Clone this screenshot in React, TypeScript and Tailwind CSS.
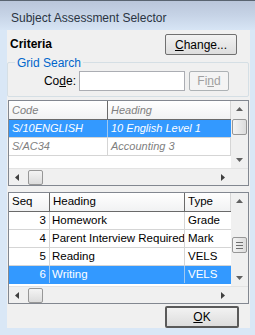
import React from "react";

const ui = { fontFamily: '"Liberation Sans", Arial, sans-serif' };

function ArrowUp() {
  return (
    <svg width="7" height="4" viewBox="0 0 7 4">
      <path d="M3.5 0 L7 4 L0 4 Z" fill="#606060" />
    </svg>
  );
}
function ArrowDown() {
  return (
    <svg width="7" height="4" viewBox="0 0 7 4">
      <path d="M0 0 L7 0 L3.5 4 Z" fill="#606060" />
    </svg>
  );
}
function ArrowLeft() {
  return (
    <svg width="4" height="7" viewBox="0 0 4 7">
      <path d="M4 0 L4 7 L0 3.5 Z" fill="#404040" />
    </svg>
  );
}
function ArrowRight() {
  return (
    <svg width="4" height="7" viewBox="0 0 4 7">
      <path d="M0 0 L4 3.5 L0 7 Z" fill="#404040" />
    </svg>
  );
}

function VScroll({ thumbTop, grip }: { thumbTop: number; grip?: boolean }) {
  return (
    <div className="relative flex w-[17px] flex-col items-center justify-between bg-[#f0f0f0] py-[6px]">
      <ArrowUp />
      <div
        className="absolute left-[1px] flex h-[16px] w-[15px] flex-col items-center justify-center gap-[2px] rounded-[2px] border border-[#979797] bg-gradient-to-r from-[#f4f4f4] to-[#dcdcdc]"
        style={{ top: thumbTop }}
      >
        {grip ? (
          <>
            <div className="h-px w-[7px] bg-[#707070]" />
            <div className="h-px w-[7px] bg-[#707070]" />
            <div className="h-px w-[7px] bg-[#707070]" />
          </>
        ) : null}
      </div>
      <ArrowDown />
    </div>
  );
}

function HScroll() {
  return (
    <div className="flex h-[17px] items-stretch border-t border-[#e3e3e3]">
      <div className="relative flex flex-1 items-center justify-between bg-[#f0f0f0] px-[6px]">
        <ArrowLeft />
        <div className="absolute left-[19px] top-[1px] h-[15px] w-[15px] rounded-[2px] border border-[#979797] bg-gradient-to-b from-[#f4f4f4] to-[#dcdcdc]" />
        <ArrowRight />
      </div>
      <div className="w-[17px] bg-[#f0f0f0]" />
    </div>
  );
}

export default function App() {
  const rows2 = [
    { seq: 3, heading: "Homework", type: "Grade" },
    { seq: 4, heading: "Parent Interview Required", type: "Mark" },
    { seq: 5, heading: "Reading", type: "VELS" },
    { seq: 6, heading: "Writing", type: "VELS", sel: true },
  ];

  return (
    <div className="h-[335px] w-[255px] overflow-hidden bg-[#d9e7f6]" style={ui}>
      <div className="flex h-[30px] flex-col bg-gradient-to-b from-[#b9c5d9] via-[#c6d3e6] to-[#d7e5f5]">
        <div className="h-px bg-[#5a6470]" />
        <div className="flex flex-1 items-center pl-[11px] pt-[4px] text-[12px] text-[#2a3442]">
          Subject Assessment Selector
        </div>
      </div>

      <div className="ml-[7px] flex h-[298px] w-[243px] flex-col bg-[#f0f0f0] text-[12px] text-black">
        <div className="flex items-start justify-between pl-[3px] pr-[13px] pt-[4px]">
          <div className="pt-[1px] font-bold">Criteria</div>
          <button className="h-[21px] w-[72px] rounded-[2px] border border-[#707070] bg-gradient-to-b from-[#f2f2f2] to-[#dddddd] text-[12px]">
            <span className="underline">C</span>hange...
          </button>
        </div>

        <div className="relative mt-[7px] mr-[1px] h-[35px] rounded-[2px] border border-[#d5dfe5]">
          <div className="absolute left-[7px] top-[-8px] bg-[#f0f0f0] px-[2px] text-[12px] leading-[16px] text-[#0066cc]">
            Grid Search
          </div>
          <div className="flex items-center pt-[8px]">
            <div className="w-[70px] pr-[2px] text-right">
              Co<span className="underline">d</span>e:
            </div>
            <div className="ml-[1px] h-[20px] w-[106px] border border-[#abadb3] bg-white" />
            <button className="ml-[4px] h-[20px] w-[40px] rounded-[2px] border border-[#adb2b5] bg-[#f4f4f4] text-[12px] text-[#a0a0a0]">
              Fi<span className="underline">n</span>d
            </button>
          </div>
        </div>

        <div className="ml-[1px] mr-[1px] mt-[3px] flex h-[86px] flex-col border border-[#828790] bg-white text-[11px] italic text-[#808080]">
          <div className="flex flex-1">
            <div className="flex flex-1 flex-col">
              <div className="flex h-[19px] border-b border-[#6a6a6a] bg-gradient-to-b from-white to-[#f1f2f3]">
                <div className="flex w-[99px] items-center border-r border-[#6a6a6a] pl-[3px]">Code</div>
                <div className="flex flex-1 items-center border-r border-[#d5d5d5] pl-[3px]">Heading</div>
              </div>
              <div className="flex h-[18px] border-b border-[#d5d5d5] bg-[#3399ff] text-white">
                <div className="flex w-[99px] items-center border-r border-[#a0c8f0] pl-[3px]">S/10ENGLISH</div>
                <div className="flex flex-1 items-center whitespace-nowrap pl-[3px]">10 English Level 1</div>
              </div>
              <div className="flex h-[18px] border-b border-[#d5d5d5]">
                <div className="flex w-[99px] items-center border-r border-[#d5d5d5] pl-[3px]">S/AC34</div>
                <div className="flex flex-1 items-center border-r border-[#d5d5d5] pl-[3px]">Accounting 3</div>
              </div>
            </div>
            <VScroll thumbTop={18} />
          </div>
          <HScroll />
        </div>

        <div className="ml-[1px] mr-[1px] mt-[6px] flex h-[112px] flex-col border border-[#828790] bg-white text-[11.5px]">
          <div className="flex flex-1">
            <div className="flex flex-1 flex-col">
              <div className="flex h-[19px] border-b border-[#6a6a6a] bg-gradient-to-b from-white to-[#f1f2f3]">
                <div className="flex w-[41px] items-center border-r border-[#6a6a6a] pl-[3px]">Seq</div>
                <div className="flex w-[135px] items-center border-r border-[#6a6a6a] pl-[3px]">Heading</div>
                <div className="flex flex-1 items-center border-r border-[#d5d5d5] pl-[3px]">Type</div>
              </div>
              {rows2.map((r) => (
                <div
                  key={r.seq}
                  className={`flex h-[18px] border-b ${r.sel ? "border-[#3399ff] bg-[#3399ff] text-white" : "border-[#d5d5d5]"}`}
                >
                  <div className={`flex w-[41px] items-center justify-end border-r pr-[3px] ${r.sel ? "border-[#a0c8f0]" : "border-[#d5d5d5]"}`}>{r.seq}</div>
                  <div className={`flex w-[135px] items-center overflow-hidden whitespace-nowrap border-r pl-[2px] ${r.sel ? "border-[#a0c8f0]" : "border-[#d5d5d5]"}`}>{r.heading}</div>
                  <div className="flex flex-1 items-center pl-[3px]">{r.type}</div>
                </div>
              ))}
            </div>
            <VScroll thumbTop={44} grip />
          </div>
          <HScroll />
        </div>

        <div className="flex justify-end pr-[11px] pt-[2px]">
          <button className="h-[22px] w-[74px] rounded-[2px] border-2 border-[#5a5a5a] bg-gradient-to-b from-[#f2f2f2] to-[#dddddd] text-[12px]">
            <span className="underline">O</span>K
          </button>
        </div>
      </div>
    </div>
  );
}
